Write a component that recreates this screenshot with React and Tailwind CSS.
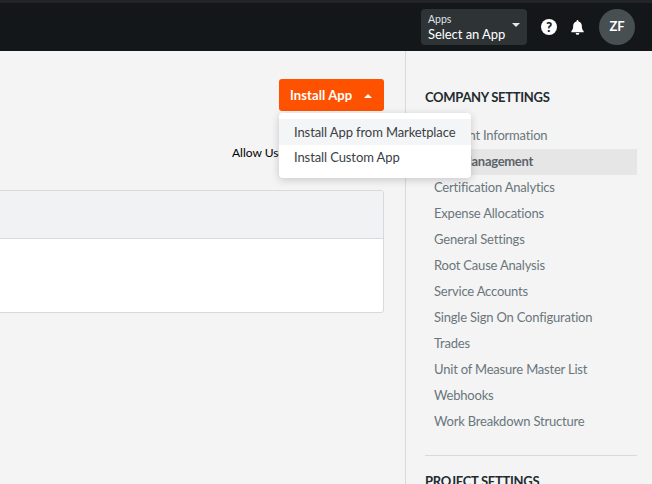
import React from "react";

const items = [
  "Account Information",
  "App Management",
  "Certification Analytics",
  "Expense Allocations",
  "General Settings",
  "Root Cause Analysis",
  "Service Accounts",
  "Single Sign On Configuration",
  "Trades",
  "Unit of Measure Master List",
  "Webhooks",
  "Work Breakdown Structure",
];

export default function App() {
  return (
    <div className="h-[484px] w-[652px] overflow-hidden flex flex-col bg-[#f4f4f4] font-['Lato',sans-serif]">
      <header className="h-[51px] shrink-0 bg-[#14171a] border-t-[3px] border-[#22242a] flex items-center justify-end pr-[17px]">
        <div className="w-[106px] h-[36px] rounded bg-[#2e3336] text-white pl-[7px] pt-[4px] relative leading-none mr-[14px]">
          <div className="text-[10.5px] leading-[13px] text-[#dfe3e6]">Apps</div>
          <div className="text-[13px] tracking-[-0.05px] leading-[17px]">Select an App</div>
          <span className="absolute right-[7px] top-[14px] w-0 h-0 border-x-[4px] border-x-transparent border-t-[4px] border-t-[#e8e8e8]" />
        </div>
        <svg viewBox="0 0 24 24" className="w-[16px] h-[16px] mr-[13px]">
          <circle cx="12" cy="12" r="12" fill="#fff" />
          <text x="12" y="19" textAnchor="middle" fontSize="20" fontWeight="900" fill="#14171a" fontFamily="Lato, sans-serif">?</text>
        </svg>
        <svg viewBox="0 0 16 16" className="w-[15px] h-[16px] mr-[14px]" fill="#fff">
          <path d="M8 0.6c-.6 0-1 .4-1 1v.5C4.8 2.6 3.4 4.4 3.4 6.6c0 3.2-.8 4.6-2 6v.9h13.2v-.9c-1.2-1.4-2-2.8-2-6 0-2.2-1.4-4-3.6-4.5v-.5c0-.6-.4-1-1-1z" />
          <path d="M6 14.3h4a2 2 0 0 1-4 0z" />
        </svg>
        <div className="w-[36px] h-[36px] rounded-full bg-[#474f53] text-white text-[13px] font-bold flex items-center justify-center">ZF</div>
      </header>
      <div className="flex flex-1 min-h-0">
        <main className="w-[406px] shrink-0 border-r border-[#d6dadc] pr-[21px] relative">
          <div className="flex justify-end pt-[28px]">
            <button className="w-[105px] h-[32px] rounded-[3px] bg-[#ff5200] text-white text-[13px] tracking-[0.1px] font-bold flex items-center pl-[11px] pt-[1px]">
              Install App
              <span className="ml-[12px] w-0 h-0 border-x-[4px] border-x-transparent border-b-[4px] border-b-white" />
            </button>
          </div>
          <div className="mt-[34px] ml-[232px] text-[12px] leading-[16px] text-black whitespace-nowrap overflow-hidden">Allow Users</div>
          <div className="mt-[29px] -ml-[3px] rounded-[3px] border border-[#d6dadc] bg-white overflow-hidden">
            <div className="h-[48px] bg-[#f1f2f4] border-b border-[#d6dadc]" />
            <div className="h-[73px]" />
          </div>
          <div className="absolute left-[279px] top-[62px] w-[192px] h-[65px] rounded bg-white shadow-[0_2px_8px_rgba(0,0,0,0.18)] py-[6px] z-10 text-[13px] tracking-[-0.1px] text-[#3a4145]">
            <div className="h-[26px] pl-[15px] pt-[1px] bg-[#f4f5f6] flex items-center whitespace-nowrap">Install App from Marketplace</div>
            <div className="h-[25px] pl-[15px] flex items-center whitespace-nowrap">Install Custom App</div>
          </div>
        </main>
        <aside className="flex-1 pl-[19px] pr-[15px] pt-[37px]">
          <h2 className="text-[13px] leading-[18px] font-bold text-[#232b30] tracking-[-0.3px] mb-[17px]">COMPANY SETTINGS</h2>
          <ul>
            {items.map((t) => (
              <li
                key={t}
                className={
                  "h-[26px] pl-[9px] flex items-center text-[13px] whitespace-nowrap " +
                  (t === "App Management" ? "bg-[#e6e6e6] font-bold text-[#5c6469] tracking-[-0.3px]" : "text-[#6a767c] tracking-[-0.2px]")
                }
              >
                {t}
              </li>
            ))}
          </ul>
          <div className="mt-[20px] border-t border-[#d6dadc] pt-[16px]">
            <h2 className="text-[13px] leading-[18px] font-bold text-[#232b30] tracking-[-0.3px]">PROJECT SETTINGS</h2>
          </div>
        </aside>
      </div>
    </div>
  );
}
